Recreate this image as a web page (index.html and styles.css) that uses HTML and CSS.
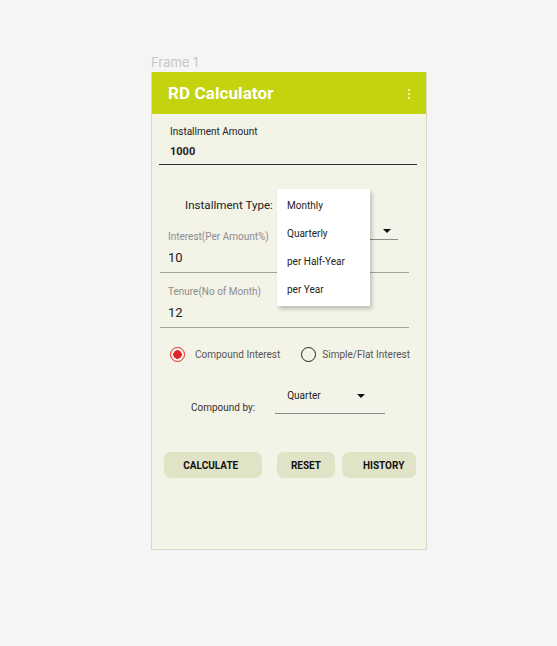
FILE: index.html
```html
<!DOCTYPE html>
<html>
<head>
<meta charset="UTF-8">
<title>RD Calculator</title>
<link rel="stylesheet" href="styles.css">
</head>
<body>
<div class="canvas">
	<div class="frame_name">Frame 1</div>
	<div class="frame">
		<div class="appbar">
			<div class="appbar_title">RD Calculator</div>
			<div class="kebab"><i></i><i></i><i></i></div>
		</div>
		<div class="content">
			<div class="amount">
				<div class="amount_label">Installment Amount</div>
				<div class="amount_value">1000</div>
			</div>
			<div class="type_row">
				<div class="type_label">Installment Type:</div>
				<div class="select select_type"><span class="caret"></span></div>
			</div>
			<div class="field field_interest">
				<div class="field_label">Interest(Per Amount%)</div>
				<div class="field_value">10</div>
			</div>
			<div class="field field_tenure">
				<div class="field_label">Tenure(No of Month)</div>
				<div class="field_value">12</div>
			</div>
			<div class="radios">
				<div class="radio on"></div><span class="radio_text">Compound Interest</span>
				<div class="radio"></div><span class="radio_text">Simple/Flat Interest</span>
			</div>
			<div class="compound_row">
				<div class="compound_label">Compound by:</div>
				<div class="select select_compound"><span>Quarter</span><span class="caret"></span></div>
			</div>
			<div class="buttons">
				<div class="btn btn_calc">CALCULATE</div>
				<div class="btn btn_reset">RESET</div>
				<div class="btn btn_history">HISTORY</div>
			</div>
		</div>
		<ul class="menu">
			<li>Monthly</li>
			<li>Quarterly</li>
			<li>per Half-Year</li>
			<li>per Year</li>
		</ul>
	</div>
</div>
</body>
</html>
```

FILE: styles.css
```css
*{margin:0;padding:0;box-sizing:border-box;}
body{background:#f5f5f5;font-family:Roboto,"Noto Sans",sans-serif;color:#222;}
li{list-style-type:none;}
.canvas{padding:54px 0 0 151px;}
.frame_name{font-family:Inter,sans-serif;font-size:13px;line-height:16px;color:#c6c6c6;height:18px;}
.frame{position:relative;width:276px;height:478px;background:#f3f3e7;border:1px solid #d8dac4;border-top:0;}
.appbar{height:42px;background:#c3d30d;display:flex;align-items:center;padding:0 16px 0 16px;}
.appbar_title{font-size:17px;font-weight:700;color:#fff;letter-spacing:0.1px;}
.kebab{margin-left:auto;display:flex;flex-direction:column;gap:2px;padding-top:1px;}
.kebab i{display:block;width:2px;height:2px;background:#eef3a8;}
.content{display:flex;flex-direction:column;}
.amount{margin:12px 9px 0 7px;padding:0 0 5px 11px;border-bottom:1px solid #2f2f2f;}
.amount_label{font-size:10px;line-height:12px;color:#222;}
.amount_value{font-size:11px;line-height:14px;font-weight:700;margin-top:7px;}
.type_row{display:flex;height:75px;padding:33px 28px 0 33px;}
.type_label{font-size:11.6px;line-height:14px;color:#222;white-space:nowrap;flex:none;}
.select{display:flex;align-items:center;border-bottom:1px solid #8a8a8a;}
.select_type{margin-left:auto;width:118px;align-self:flex-end;height:18px;justify-content:flex-end;padding-right:7px;}
.caret{width:0;height:0;border-left:4px solid transparent;border-right:4px solid transparent;border-top:4px solid #111;}
.field{margin:0 17px 0 8px;padding:0 0 6px 8px;border-bottom:1px solid #a3a39a;}
.field_interest{margin-top:-9px;}
.field_tenure{margin-top:13px;}
.field_label{font-size:10px;line-height:12px;color:#8c8c8c;}
.field_value{font-size:13px;line-height:16px;margin-top:7px;color:#222;}
.radios{display:flex;align-items:center;margin-top:19px;padding-left:18px;}
.radio{width:15px;height:15px;border-radius:50%;border:1.5px solid #222;flex:none;}
.radio.on{border-color:#e0242a;background:radial-gradient(circle,#e0242a 0,#e0242a 4px,transparent 4.5px);}
.radio_text{font-size:10px;line-height:12px;color:#555;margin-left:10px;margin-right:21px;white-space:nowrap;}
.radio_text:last-child{margin-left:6px;margin-right:0;}
.compound_row{display:flex;align-items:flex-end;margin-top:28px;padding-left:39px;}
.compound_label{font-size:10px;line-height:12px;color:#333;white-space:nowrap;}
.select_compound{margin-left:20px;width:110px;padding:0 0 11px 12px;font-size:10px;line-height:12px;color:#222;}
.select_compound .caret{margin-left:auto;margin-right:20px;}
.buttons{display:flex;margin:38px 10px 0 12px;}
.btn{height:26px;border-radius:7px;background:#e1e3c6;font-size:10px;font-weight:700;color:#111;display:flex;align-items:center;justify-content:center;}
.btn_calc{width:98px;padding-right:4px;}
.btn_reset{width:59px;margin-left:15px;}
.btn_history{width:74px;margin-left:7px;padding-left:9px;}
.menu{position:absolute;left:125px;top:117px;width:93px;background:#fff;padding:3px 0 2px;box-shadow:2px 3px 4px rgba(0,0,0,0.22);}
.menu li{height:28px;line-height:28px;font-size:10px;padding-left:10px;color:#222;}
```
